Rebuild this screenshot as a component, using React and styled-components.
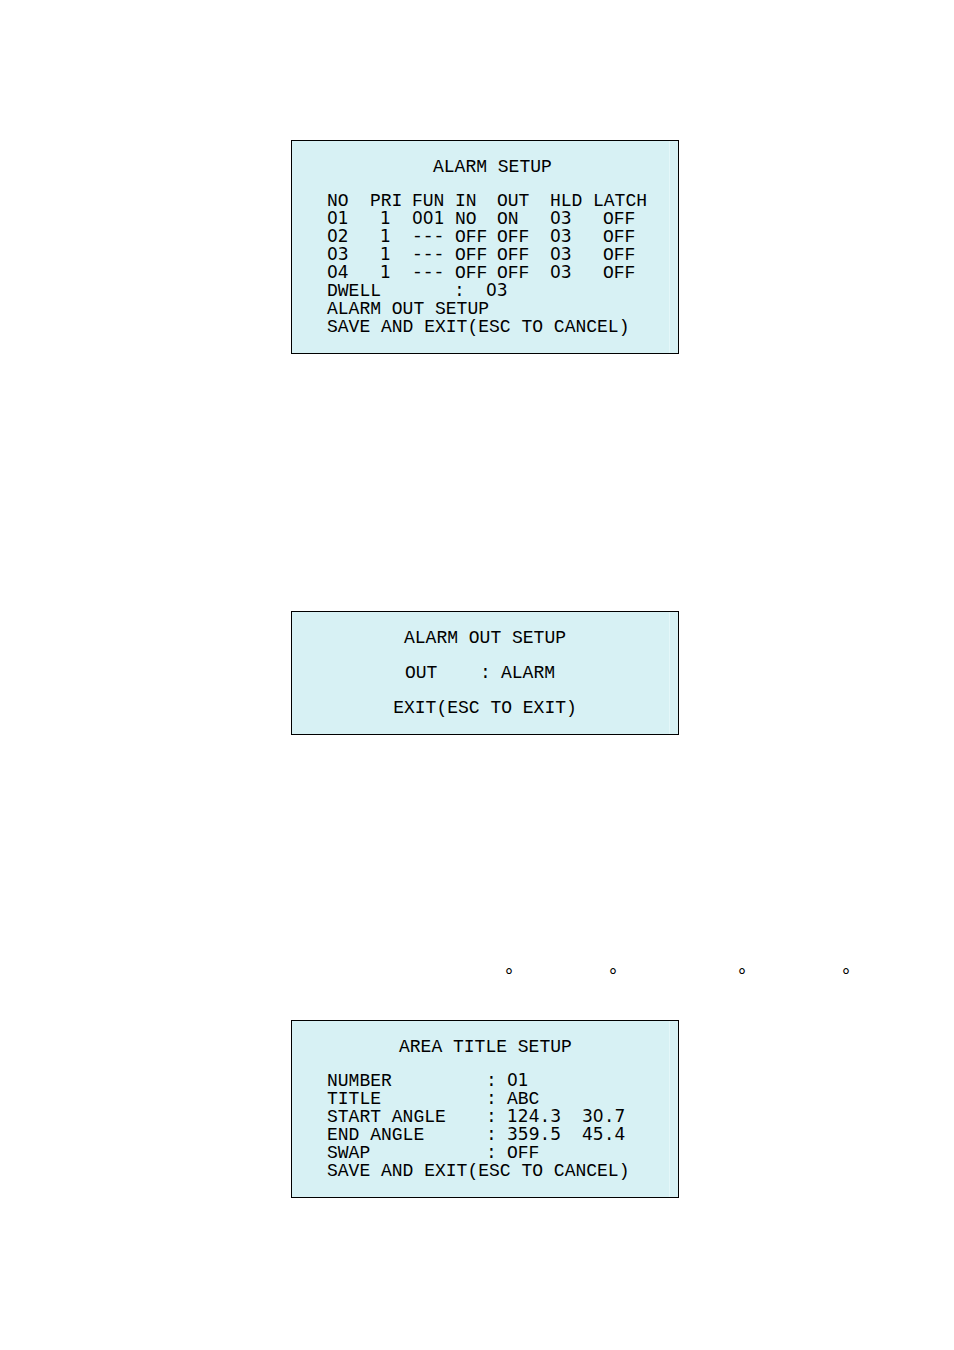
import React from "react";
import styled, { createGlobalStyle } from "styled-components";

const GlobalStyle = createGlobalStyle`
  body {
    margin: 0;
    background-color: #fff;
  }
`;

const Page = styled.main`
  display: flex;
  flex-direction: column;
  align-items: center;
  box-sizing: border-box;
  padding: 140px 0 152px 16px;
  font-family: "Liberation Mono", "DejaVu Sans Mono", monospace;
  font-size: 18px;
  line-height: 18px;
  color: #000;
`;

const Panel = styled.section`
  box-sizing: border-box;
  width: 100%;
  max-width: 388px;
  margin-bottom: ${(props) => props.$after || 0}px;
  padding-right: 8px;
  border: 1px solid #000;
  background-color: #d7f1f4;
`;

const Screen = styled.div`
  padding: 17px 0 17px 35px;
  border-right: 1px solid #e4f7f9;
  white-space: pre;
`;

const CenterScreen = styled(Screen)`
  display: flex;
  flex-direction: column;
  align-items: center;
  gap: 17px;
  padding-left: 9px;
`;

const Title = styled.h2`
  margin: 0;
  padding-left: ${(props) => props.$indent || 0}px;
  font-size: inherit;
  font-weight: normal;
`;

const ScreenTitle = styled(Title)`
  margin-bottom: 16px;
`;

const Line = styled.p`
  margin: 0;
`;

const Digits = styled.span`
  font-family: "DejaVu Sans", sans-serif;
  font-size: 17px;
  line-height: 14px;
`;

const AlarmTable = styled.table`
  table-layout: fixed;
  width: 330px;
  border-collapse: collapse;
  th,
  td {
    padding: 0;
    height: 18px;
    font-weight: normal;
    text-align: left;
    vertical-align: baseline;
  }
  tbody td:nth-child(2),
  tbody td:last-child {
    padding-left: 10px;
  }
`;

const Col = styled.col`
  width: ${(props) => props.$width}px;
`;

const Field = styled.div`
  display: grid;
  grid-template-columns: ${(props) => props.$columns};
`;

const Degrees = styled.div`
  display: flex;
  align-self: flex-end;
  gap: 121px;
  margin: 0 104px 35px 0;
  font-family: "Liberation Sans", Arial, sans-serif;
  font-size: 20px;
`;

const DegreePair = styled.div`
  display: flex;
  gap: 96px;
`;

const alarms = [
  ["01", "1", "001", "NO", "ON", "03", "OFF"],
  ["02", "1", "---", "OFF", "OFF", "03", "OFF"],
  ["03", "1", "---", "OFF", "OFF", "03", "OFF"],
  ["04", "1", "---", "OFF", "OFF", "03", "OFF"],
];

const areaFields = [
  ["NUMBER", "01"],
  ["TITLE", "ABC"],
  ["START ANGLE", "124.3", "30.7"],
  ["END ANGLE", "359.5", "45.4"],
  ["SWAP", "OFF"],
];

// numbers use a plain zero, everything else stays monospaced
function Value({ text = "" }) {
  return text
    .split(/(\d+)/)
    .map((part, i) =>
      /\d/.test(part) ? <Digits key={i}>{part}</Digits> : part
    );
}

function AlarmSetup() {
  return (
    <Panel $after={257}>
      <Screen>
        <ScreenTitle $indent={106}>ALARM SETUP</ScreenTitle>
        <AlarmTable>
          <colgroup>
            {[43, 42, 43, 42, 53, 43, 64].map((width, i) => (
              <Col key={i} $width={width} />
            ))}
          </colgroup>
          <thead>
            <tr>
              {["NO", "PRI", "FUN", "IN", "OUT", "HLD", "LATCH"].map((name) => (
                <th key={name} scope="col">
                  {name}
                </th>
              ))}
            </tr>
          </thead>
          <tbody>
            {alarms.map((alarm) => (
              <tr key={alarm[0]}>
                {alarm.map((text, i) => (
                  <td key={i}>
                    <Value text={text} />
                  </td>
                ))}
              </tr>
            ))}
          </tbody>
        </AlarmTable>
        <Field $columns="127px 32px 1fr">
          <span>DWELL</span>
          <span>:</span>
          <span>
            <Value text="03" />
          </span>
        </Field>
        <Line>ALARM OUT SETUP</Line>
        <Line>SAVE AND EXIT(ESC TO CANCEL)</Line>
      </Screen>
    </Panel>
  );
}

function AlarmOutSetup() {
  return (
    <Panel $after={232}>
      <CenterScreen>
        <Title>ALARM OUT SETUP</Title>
        <Field $columns="75px 21px 64px">
          <span>OUT</span>
          <span>:</span>
          <span>ALARM</span>
        </Field>
        <Line>EXIT(ESC TO EXIT)</Line>
      </CenterScreen>
    </Panel>
  );
}

function AreaTitleSetup() {
  return (
    <Panel>
      <Screen>
        <ScreenTitle $indent={72}>AREA TITLE SETUP</ScreenTitle>
        {areaFields.map(([label, value, second]) => (
          <Field key={label} $columns="159px 21px 75px 1fr">
            <span>{label}</span>
            <span>:</span>
            <span>
              <Value text={value} />
            </span>
            <span>
              <Value text={second} />
            </span>
          </Field>
        ))}
        <Line>SAVE AND EXIT(ESC TO CANCEL)</Line>
      </Screen>
    </Panel>
  );
}

function App() {
  return (
    <>
      <GlobalStyle />
      <Page>
        <AlarmSetup />
        <AlarmOutSetup />
        <Degrees>
          <DegreePair>
            <span>°</span>
            <span>°</span>
          </DegreePair>
          <DegreePair>
            <span>°</span>
            <span>°</span>
          </DegreePair>
        </Degrees>
        <AreaTitleSetup />
      </Page>
    </>
  );
}

export default App;
